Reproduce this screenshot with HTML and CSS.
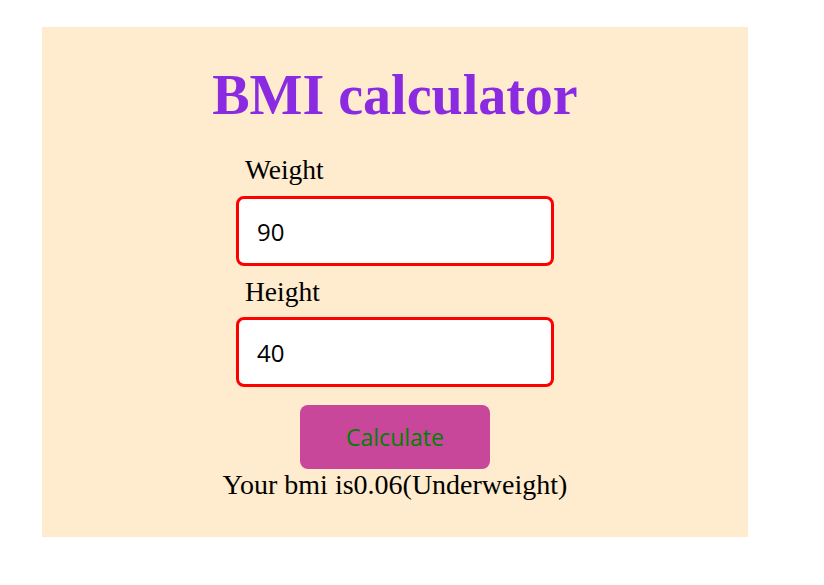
FILE: index.html
```html
<!DOCTYPE html>
<html lang="en">
<head>
<meta charset="utf-8">
<title>BMI calculator</title>
<link rel="stylesheet" href="styles.css">
</head>
<body>
  <div class="card">
    <h1 class="title">BMI calculator</h1>
    <div class="form">
      <label class="label" for="weight">Weight</label>
      <input class="field" id="weight" type="text" value="90">
      <label class="label label-second" for="height">Height</label>
      <input class="field" id="height" type="text" value="40">
    </div>
    <button class="btn" type="button">Calculate</button>
    <p class="result">Your bmi is0.06(Underweight)</p>
  </div>
</body>
</html>
```
FILE: styles.css
```css
html, body {
  margin: 0;
  padding: 0;
  background: #ffffff;
}

.card {
  margin: 27px 0 0 42px;
  width: 706px;
  height: 510px;
  box-sizing: border-box;
  padding-top: 36px;
  background: #ffebcd;
  display: flex;
  flex-direction: column;
  align-items: center;
}

.title {
  margin: 0;
  font-family: "Liberation Serif", "Times New Roman", serif;
  font-weight: 700;
  font-size: 56px;
  line-height: 64px;
  color: #8a2be2;
}

.form {
  width: 318px;
  margin-top: 27px;
  display: flex;
  flex-direction: column;
}

.label {
  font-family: "Liberation Serif", "Times New Roman", serif;
  font-size: 27.5px;
  line-height: 32px;
  color: #000;
  padding-left: 9px;
  margin-bottom: 10px;
}

.label-second {
  margin-top: 10px;
  margin-bottom: 9px;
}

.field {
  box-sizing: border-box;
  width: 318px;
  height: 70px;
  margin: 0;
  border: 3px solid #ff0000;
  border-radius: 8px;
  background: #ffffff;
  padding: 0 18px;
  font-family: "Open Sans", "DejaVu Sans", sans-serif;
  font-size: 24px;
  color: #000;
  outline: none;
}

.btn {
  margin-top: 18px;
  width: 190px;
  height: 64px;
  border: none;
  border-radius: 8px;
  background: #c8479a;
  color: #008000;
  font-family: "Open Sans", "DejaVu Sans", sans-serif;
  font-size: 23px;
  padding: 0;
}

.result {
  margin: 0;
  font-family: "Liberation Serif", "Times New Roman", serif;
  font-size: 28px;
  line-height: 32px;
  color: #000;
}
```
